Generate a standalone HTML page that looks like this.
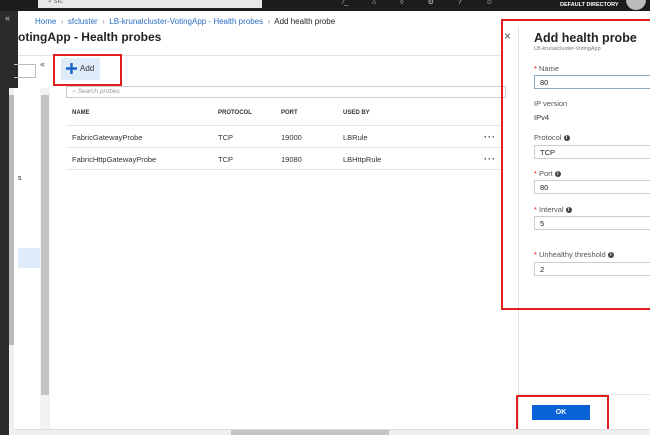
<!DOCTYPE html>
<html><head><meta charset="utf-8"><style>
*{margin:0;padding:0;box-sizing:border-box}
body{width:650px;height:435px;overflow:hidden;position:relative;background:#fff;font-family:"Liberation Sans",sans-serif;color:#222}
.a{position:absolute}
.t{font-size:7.5px;color:#333}
.lbl{font-size:7.5px;color:#555}
.inp{position:absolute;left:534px;width:120px;height:14px;border:1px solid #ccc;font-size:7.5px;padding:2px 5px;color:#222}
.star{color:#e00}
.i{display:inline-block;width:6px;height:6px;border-radius:50%;background:#444;color:#fff;font-size:5px;text-align:center;line-height:6px;font-weight:bold;vertical-align:middle}
.dots{font-size:9px;font-weight:bold;letter-spacing:1px;color:#333}
</style></head><body>
<div class="a" style="left:0;top:0;width:650px;height:11px;background:#1c1c1c"></div>
<div class="a" style="left:38px;top:0;width:224px;height:8px;background:#e8e8e8;font-size:7px;color:#666;padding-left:10px;line-height:4px">⌕ sfc</div>
<div class="a" style="left:343px;top:0;color:#ccc;font-size:7px;line-height:5px;word-spacing:22px">⁄_ ⌂ ◊ ⚙ ? ☺</div>
<div class="a" style="left:560px;top:2px;color:#fff;font-size:5.5px;font-weight:bold">DEFAULT DIRECTORY</div>
<div class="a" style="left:626px;top:0;width:20px;height:10px;border-radius:0 0 10px 10px;background:#bbb"></div>
<div class="a" style="left:0;top:11px;width:18px;height:27px;background:#2b2b2b"></div>
<div class="a" style="left:0;top:38px;width:9px;height:397px;background:#2b2b2b"></div>
<div class="a" style="left:9px;top:38px;width:9px;height:50px;background:#2b2b2b"></div>
<div class="a" style="left:5px;top:13px;color:#ccc;font-size:9px">«</div>
<div class="a" style="left:9px;top:88px;width:5px;height:347px;background:#f0f0f0"></div>
<div class="a" style="left:9px;top:95px;width:5px;height:250px;background:#bbb"></div>
<div class="a" style="left:35px;top:17px;font-size:8px;color:#2b6dc2">Home &nbsp;<span style="color:#888">›</span>&nbsp; sfcluster &nbsp;<span style="color:#888">›</span>&nbsp; LB-krunalcluster-VotingApp - Health probes &nbsp;<span style="color:#888">›</span>&nbsp; <span style="color:#222">Add health probe</span></div>
<div class="a" style="left:18px;top:30px;font-size:12px;font-weight:bold;color:#222">otingApp - Health probes</div>
<div class="a" style="left:18px;top:55px;width:483px;height:1px;background:#e4e4e4"></div>
<div class="a" style="left:14px;top:64px;width:22px;height:14px;border:1px solid #bbb;border-left:none"></div>
<div class="a" style="left:40px;top:59px;font-size:9px;color:#555">«</div>
<div class="a" style="left:18px;top:248px;width:22px;height:20px;background:#deecf9"></div>
<div class="a" style="left:18px;top:175px;font-size:7px">s</div>
<div class="a" style="left:40px;top:88px;width:10px;height:342px;background:#f2f2f2"></div>
<div class="a" style="left:41px;top:95px;width:8px;height:300px;background:#c4c4c4"></div>
<div class="a" style="left:61px;top:58px;width:39px;height:22px;background:#deecf9"></div>
<svg class="a" style="left:66px;top:63px" width="11" height="11"><path d="M5.5 0V11M0 5.5H11" stroke="#1a64c8" stroke-width="2.4"/></svg>
<div class="a" style="left:80px;top:64px;font-size:8px;color:#333">Add</div>
<div class="a" style="left:53px;top:54px;width:69px;height:32px;border:2px solid #e02020"></div>
<div class="a" style="left:66px;top:86px;width:440px;height:12px;border:1px solid #ccc;font-size:6.5px;color:#999;font-style:italic;padding:1px 5px">⌕ Search probes</div>
<div class="a t" style="left:72px;top:110px;font-weight:bold;font-size:6px">NAME</div>
<div class="a t" style="left:218px;top:110px;font-weight:bold;font-size:6px">PROTOCOL</div>
<div class="a t" style="left:281px;top:110px;font-weight:bold;font-size:6px">PORT</div>
<div class="a t" style="left:343px;top:110px;font-weight:bold;font-size:6px">USED BY</div>
<div class="a" style="left:66px;top:125px;width:435px;height:1px;background:#e6e6e6"></div>
<div class="a t" style="left:72px;top:133px">FabricGatewayProbe</div>
<div class="a t" style="left:218px;top:133px">TCP</div>
<div class="a t" style="left:281px;top:133px">19000</div>
<div class="a t" style="left:343px;top:133px">LBRule</div>
<div class="a dots" style="left:484px;top:132px">···</div>
<div class="a" style="left:66px;top:147px;width:435px;height:1px;background:#e6e6e6"></div>
<div class="a t" style="left:72px;top:155px">FabricHttpGatewayProbe</div>
<div class="a t" style="left:218px;top:155px">TCP</div>
<div class="a t" style="left:281px;top:155px">19080</div>
<div class="a t" style="left:343px;top:155px">LBHttpRule</div>
<div class="a dots" style="left:484px;top:154px">···</div>
<div class="a" style="left:66px;top:169px;width:435px;height:1px;background:#e6e6e6"></div>
<div class="a" style="left:504px;top:29px;font-size:12px;color:#555">×</div>
<div class="a" style="left:518px;top:26px;width:1px;height:409px;background:#e4e4e4"></div>
<div class="a" style="left:534px;top:31px;font-size:12.5px;font-weight:bold">Add health probe</div>
<div class="a" style="left:534px;top:46px;font-size:5.5px;color:#777">LB-krunalcluster-VotingApp</div>
<div class="a lbl" style="left:534px;top:64px"><span class="star">*</span> Name</div>
<div class="inp" style="top:75px;border-color:#8ab">80</div>
<div class="a lbl" style="left:534px;top:99px">IP version</div>
<div class="a lbl" style="left:534px;top:113px;color:#333">IPv4</div>
<div class="a lbl" style="left:534px;top:133px">Protocol <span class="i">i</span></div>
<div class="inp" style="top:145px">TCP</div>
<div class="a lbl" style="left:534px;top:169px"><span class="star">*</span> Port <span class="i">i</span></div>
<div class="inp" style="top:180px">80</div>
<div class="a lbl" style="left:534px;top:205px"><span class="star">*</span> Interval <span class="i">i</span></div>
<div class="inp" style="top:216px">5</div>
<div class="a lbl" style="left:534px;top:250px"><span class="star">*</span> Unhealthy threshold <span class="i">i</span></div>
<div class="inp" style="top:262px">2</div>
<div class="a" style="left:501px;top:19px;width:152px;height:291px;border:2px solid #e02020"></div>
<div class="a" style="left:519px;top:394px;width:131px;height:1px;background:#e4e4e4"></div>
<div class="a" style="left:532px;top:405px;width:58px;height:15px;background:#0a63d6;color:#fff;font-size:7px;font-weight:bold;text-align:center;line-height:15px">OK</div>
<div class="a" style="left:516px;top:395px;width:93px;height:37px;border:2px solid #e02020"></div>
<div class="a" style="left:14px;top:429px;width:636px;height:6px;background:#f0f0f0;border-top:1px solid #ddd"></div>
<div class="a" style="left:231px;top:430px;width:158px;height:5px;background:#c4c4c4"></div>
</body></html>
